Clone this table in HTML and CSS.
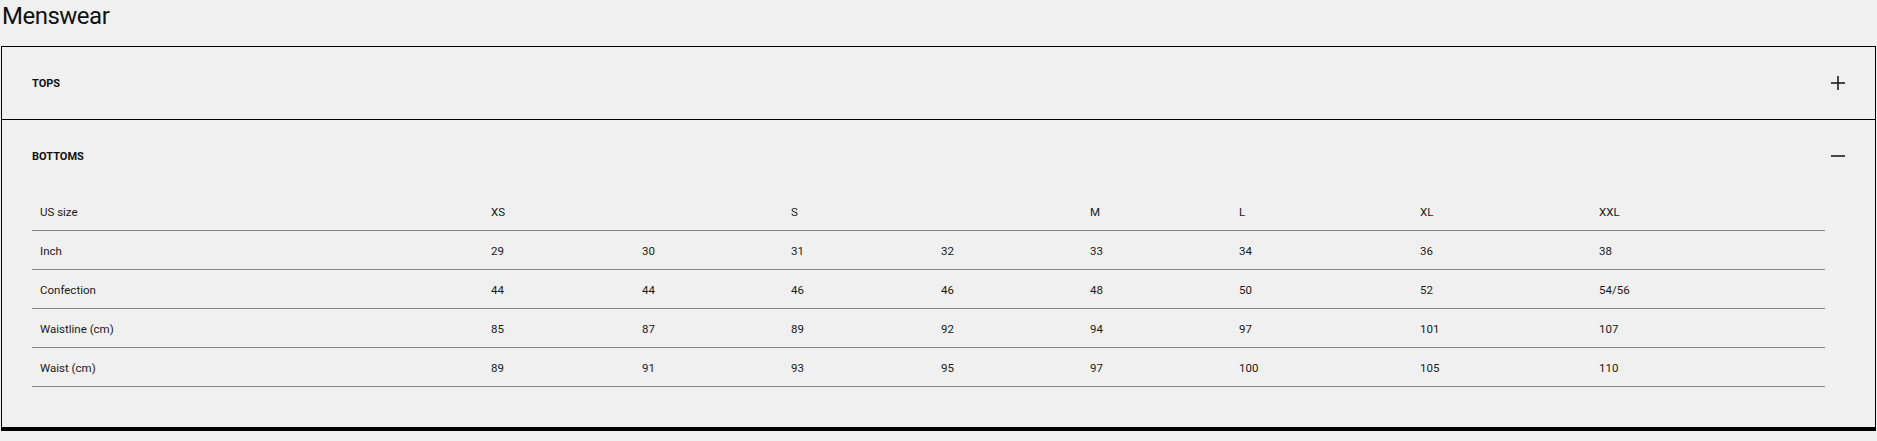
FILE: index.html
```html
<!DOCTYPE html>
<html lang="en">
<head>
<meta charset="utf-8">
<title>Menswear size chart</title>
<link rel="stylesheet" href="styles.css">
</head>
<body>
<h1 class="page-title">Menswear</h1>
<div class="accordion">
  <div class="acc-item">
    <div class="acc-header">
      <span class="acc-title">TOPS</span>
      <svg class="acc-icon" width="14" height="14" viewBox="0 0 14 14"><path d="M0 7H14M7 0V14" stroke="#111" stroke-width="1.5" fill="none"/></svg>
    </div>
  </div>
  <div class="acc-item acc-open">
    <div class="acc-header">
      <span class="acc-title">BOTTOMS</span>
      <svg class="acc-icon" width="14" height="14" viewBox="0 0 14 14"><path d="M0 7H14" stroke="#111" stroke-width="1.5" fill="none"/></svg>
    </div>
    <div class="acc-body">
      <table class="size-table">
        <colgroup>
          <col class="c-label">
          <col class="c-151"><col class="c-149"><col class="c-150"><col class="c-149"><col class="c-149">
          <col class="c-181"><col class="c-179">
          <col>
        </colgroup>
        <tbody>
          <tr><td>US size</td><td>XS</td><td></td><td>S</td><td></td><td>M</td><td>L</td><td>XL</td><td>XXL</td></tr>
          <tr><td>Inch</td><td>29</td><td>30</td><td>31</td><td>32</td><td>33</td><td>34</td><td>36</td><td>38</td></tr>
          <tr><td>Confection</td><td>44</td><td>44</td><td>46</td><td>46</td><td>48</td><td>50</td><td>52</td><td>54/56</td></tr>
          <tr><td>Waistline (cm)</td><td>85</td><td>87</td><td>89</td><td>92</td><td>94</td><td>97</td><td>101</td><td>107</td></tr>
          <tr><td>Waist (cm)</td><td>89</td><td>91</td><td>93</td><td>95</td><td>97</td><td>100</td><td>105</td><td>110</td></tr>
        </tbody>
      </table>
    </div>
  </div>
</div>
</body>
</html>
```

FILE: styles.css
```css
html, body {
  margin: 0;
  padding: 0;
  background: #f0f0f0;
  color: #111;
  font-family: Roboto, "Liberation Sans", sans-serif;
}

.page-title {
  margin: 0 0 16px 0;
  padding: 2px 0 0 2px;
  font-size: 24px;
  line-height: 28px;
  font-weight: 400;
  letter-spacing: -0.5px;
  color: #111;
}

.accordion {
  margin: 0 1px;
  border: 1px solid #000;
  border-bottom-width: 4px;
}

.acc-item + .acc-item {
  border-top: 1px solid #000;
}

.acc-header {
  height: 72px;
  display: flex;
  align-items: center;
  justify-content: space-between;
  padding: 0 30px;
}

.acc-title {
  font-size: 11px;
  font-weight: 700;
}

.acc-icon {
  display: block;
}

.acc-body {
  padding: 0 50px 40px 30px;
}

.size-table {
  width: 100%;
  table-layout: fixed;
  border-collapse: separate;
  border-spacing: 0;
  font-size: 11.5px;
  color: #1a1a1a;
}

.c-label { width: 451px; }
.c-149 { width: 149px; }
.c-150 { width: 150px; }
.c-151 { width: 151px; }
.c-179 { width: 179px; }
.c-181 { width: 181px; }

.size-table td {
  padding: 13px 8px 11px;
  line-height: 14px;
  border-bottom: 1px solid #858585;
  white-space: nowrap;
  text-align: left;
  vertical-align: middle;
}
```
